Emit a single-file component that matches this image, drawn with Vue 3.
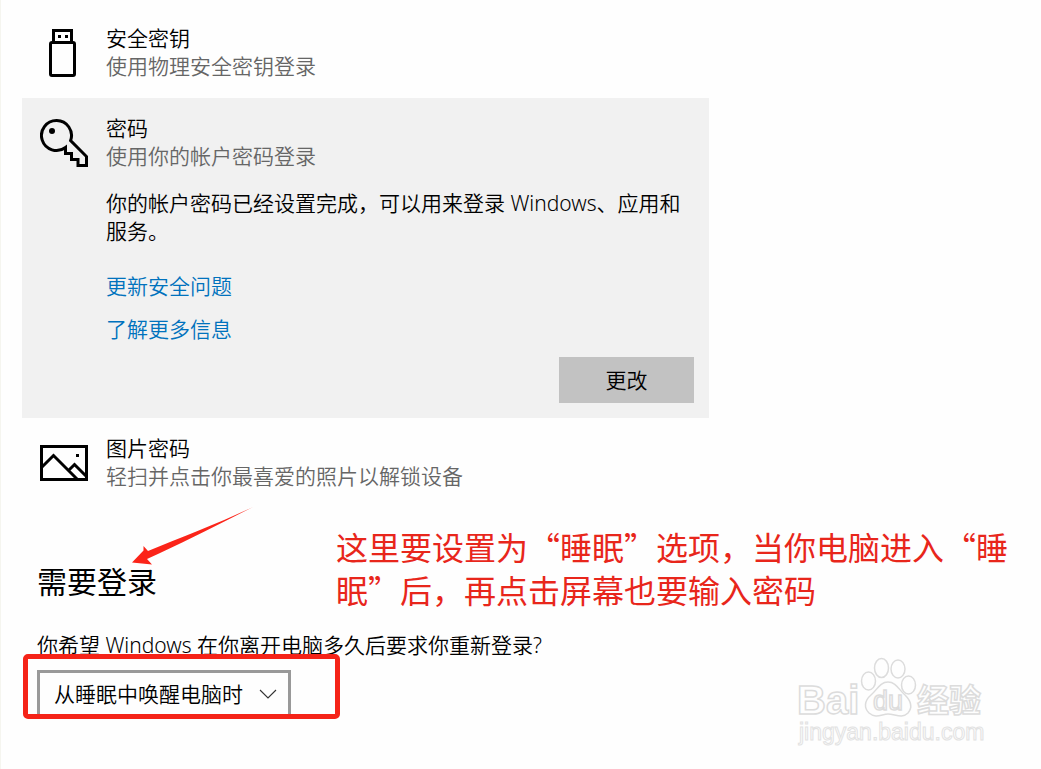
<script setup>
import { ref } from 'vue'

const wake = ref('wake')
</script>

<template>
  <main class="page" lang="zh-CN">
    <section class="options">
      <article class="option">
        <svg class="icon" viewBox="0 0 48 48" aria-hidden="true">
          <g fill="none" stroke="#000" stroke-width="3">
            <path d="M13.500 13V1.500H31.500V13" />
            <rect x="10.500" y="13.500" width="24" height="33" rx="1.500" />
          </g>
          <path d="M18 6h3v3h-3zM25 6h3v3h-3z" />
        </svg>
        <div class="body">
          <h3>安全密钥</h3>
          <p class="hint">使用物理安全密钥登录</p>
        </div>
      </article>

      <article class="option selected">
        <svg class="icon" viewBox="0 0 48 48" aria-hidden="true">
          <path
            d="M30.600 21.600A15 15 0 1 0 25.500 28.500V34.500H31.500V40.500H38V46.500H46.500V37.500Z"
            fill="none" stroke="#000" stroke-width="3" />
          <circle cx="12" cy="12" r="3" />
        </svg>
        <div class="body">
          <h3>密码</h3>
          <p class="hint">使用你的帐户密码登录</p>
          <p class="detail">你的帐户密码已经设置完成，可以用来登录 Windows、应用和服务。</p>
          <nav class="links">
            <a href="#security">更新安全问题</a>
            <a href="#more">了解更多信息</a>
          </nav>
          <button class="change" type="button">更改</button>
        </div>
      </article>

      <article class="option">
        <svg class="icon" viewBox="0 0 48 48" aria-hidden="true">
          <g fill="none" stroke="#000" stroke-width="3">
            <rect x="1.500" y="7.500" width="45" height="33" />
            <path d="M2 28L13.500 16.500L37 40M28.500 31.500L34.500 25.500L46 37" />
          </g>
          <path d="M36 15h3v3h-3z" />
        </svg>
        <div class="body">
          <h3>图片密码</h3>
          <p class="hint">轻扫并点击你最喜爱的照片以解锁设备</p>
        </div>
      </article>
    </section>

    <section class="signin">
      <h2>需要登录</h2>
      <label for="wake">你希望 Windows 在你离开电脑多久后要求你重新登录?</label>
      <div class="picker">
        <select id="wake" v-model="wake">
          <option value="wake">从睡眠中唤醒电脑时</option>
          <option value="never">从不</option>
        </select>
        <svg class="chevron" viewBox="0 0 18 10" aria-hidden="true">
          <path d="M1 1L9 9L17 1" fill="none" stroke="#333" stroke-width="1.100" />
        </svg>
        <span class="frame"></span>
      </div>
    </section>

    <svg class="arrow" viewBox="0 0 122 60" aria-hidden="true">
      <path d="M122 1C86 18 48 32 17 45L12.500 40V44.500L1 56.500L21 58.500L16 53L28 47.500C60 33 90 17 122 1Z" fill="#fb2419" />
    </svg>
    <p class="note">这里要设置为“睡眠”选项，当你电脑进入“睡眠”后，再点击屏幕也要输入密码</p>

    <svg class="mark" viewBox="0 0 190 96" aria-hidden="true">
      <g class="outline">
        <text class="bai" x="1" y="60">Bai</text>
        <ellipse cx="72.500" cy="27" rx="7" ry="9" />
        <ellipse cx="85.500" cy="14" rx="7" ry="9.500" />
        <ellipse cx="102" cy="15" rx="7" ry="9" />
        <ellipse cx="112.500" cy="31" rx="7" ry="9" />
        <path d="M92 28C84 28 81 36 75 41C68 47 68 54 73 59C80 65 86 60 92 60C99 60 106 65 112 59C117 53 115 47 109 41C103 36 100 28 92 28Z" />
        <text class="du" x="77" y="56">du</text>
        <text class="jingyan" x="121" y="58">经验</text>
        <text class="site" x="3" y="86">jingyan.baidu.com</text>
      </g>
    </svg>
  </main>
</template>

<style>
body {
  margin: 0;
  background: #fefefe;
}
</style>

<style scoped>
.page {
  position: relative;
  box-sizing: border-box;
  min-height: 100vh;
  padding: 8px 21px;
  border-left: 1px solid #f5f5ef;
  background: #fefefe;
  color: #000;
  font-family: "Noto Sans", "Noto Sans CJK SC", sans-serif;
  font-size: 21px;
  font-weight: 350;
  line-height: 28px;
}
h2, h3, p {
  margin: 0;
  font-weight: inherit;
}
h3 {
  font-size: 21px;
}
.options {
  max-width: 687px;
}
.option {
  display: flex;
  gap: 18px;
  padding: 16px 15px 18px 18px;
}
.option.selected {
  padding-bottom: 15px;
  background: #f1f1f1;
}
.icon {
  flex: none;
  width: 48px;
  height: 48px;
  margin-top: 5px;
}
.body {
  flex: 1;
  display: flex;
  flex-direction: column;
}
.hint {
  color: #666;
}
.detail {
  margin-top: 19px;
}
.links {
  display: flex;
  flex-direction: column;
  align-items: flex-start;
  gap: 15px;
  margin-top: 27px;
}
.links a {
  color: #0072bd;
  text-decoration: none;
}
.change {
  align-self: flex-end;
  width: 135px;
  height: 46px;
  margin-top: 14px;
  padding: 0;
  border: 0;
  background: #c2c2c2;
  color: #000;
  font: inherit;
}
.signin {
  margin-top: 54px;
  padding-left: 15px;
}
h2 {
  margin-bottom: 29px;
  font-size: 30px;
  font-weight: 400;
  line-height: 40px;
}
label {
  display: block;
}
.picker {
  position: relative;
  width: 254px;
  margin-top: 11px;
}
select {
  display: block;
  appearance: none;
  width: 100%;
  height: 47px;
  padding: 0 40px 0 14px;
  border: 3px solid #999;
  border-radius: 0;
  background: #fefefe;
  color: #000;
  font: inherit;
}
.chevron {
  position: absolute;
  top: 19px;
  right: 14px;
  width: 18px;
  height: 10px;
  pointer-events: none;
}
.frame {
  position: absolute;
  inset: -16px -49px -2px -14px;
  border: 5px solid #f52318;
  border-radius: 5px;
  pointer-events: none;
}
.arrow {
  position: absolute;
  top: 506px;
  left: 130px;
  width: 122px;
  height: 60px;
}
.note {
  position: absolute;
  top: 525px;
  left: 335px;
  right: 28px;
  color: #e8261b;
  font-family: "Noto Sans CJK SC", sans-serif;
  font-size: 32px;
  font-weight: 400;
  line-height: 43px;
}
.mark {
  position: absolute;
  right: 55px;
  bottom: 19px;
  width: 190px;
  height: 96px;
}
.outline {
  fill: #fefefe;
  stroke: #dcdcdc;
  stroke-width: 1.5px;
  font-family: "Liberation Sans", "Noto Sans CJK SC", sans-serif;
}
.bai {
  font-size: 40px;
  font-weight: 700;
}
.du {
  font-size: 27px;
  font-weight: 400;
}
.jingyan {
  font-size: 32px;
  font-weight: 700;
}
.site {
  font-size: 23px;
  font-weight: 400;
  stroke: #e2e2e2;
  stroke-width: 1px;
}
</style>
